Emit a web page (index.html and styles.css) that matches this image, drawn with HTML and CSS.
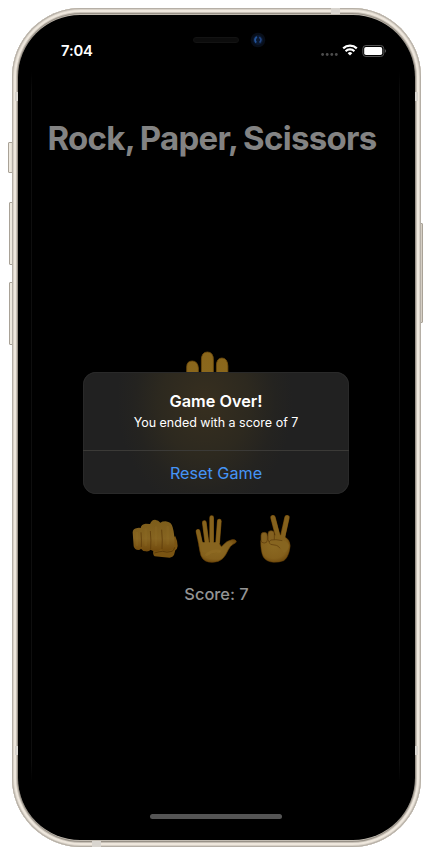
FILE: index.html
```html
<!DOCTYPE html>
<html lang="en">
<head>
<meta charset="utf-8">
<title>Rock, Paper, Scissors</title>
<link rel="stylesheet" href="styles.css">
</head>
<body>
<div class="phone">
  <span class="key mute"></span><span class="key volume-up"></span><span class="key volume-down"></span><span class="key power"></span>
  <div class="frame">
    <div class="screen">
      <span class="edge edge-left"></span><span class="edge edge-right"></span>
      <header class="status">
        <span class="time">7:04</span>
        <span class="indicators">
          <svg width="66" height="14" viewBox="0 0 66 14">
            <g fill="#4d4d4d"><circle cx="2.6" cy="10.5" r="1.4"/><circle cx="7.2" cy="10.5" r="1.4"/><circle cx="11.8" cy="10.5" r="1.4"/><circle cx="16.3" cy="10.5" r="1.4"/></g>
            <g fill="none" stroke="#fff" stroke-width="2.2"><path d="M23.2 4.4a9.8 9.8 0 0 1 13.6 0"/><path d="M25.6 7.2a6.3 6.3 0 0 1 8.8 0"/></g>
            <path d="M27.7 9.2a3.2 3.2 0 0 1 4.6 0L30 11.6z" fill="#fff"/>
            <rect x="42.8" y="1.5" width="21" height="11" rx="3.2" fill="none" stroke="#555" stroke-width="1"/>
            <rect x="44.2" y="2.9" width="18" height="8.2" rx="1.8" fill="#fff"/>
            <path d="M64.8 5.1q2.6 1.8 0 3.8z" fill="#555"/>
          </svg>
        </span>
        <span class="speaker"></span>
        <span class="camera"><svg width="16" height="16" viewBox="0 0 16 16"><circle cx="8" cy="8" r="7.3" fill="#080e19"/><circle cx="8" cy="8" r="5" fill="#0b1930"/><path d="M6.8 4.7Q3.6 7.5 6.2 10.6" fill="none" stroke="#235399" stroke-width="1.8"/><path d="M9.2 5.2q3.4 2.1.4 5.4" fill="none" stroke="#214482" stroke-width="1.6"/></svg></span>
      </header>
      <h1>Rock, Paper, Scissors</h1>
      <div class="choice">
        <svg width="44" height="70" viewBox="0 0 44 70">
          <defs><linearGradient id="finger" x2="0" y2="1"><stop stop-color="#8a661b"/><stop offset="1" stop-color="#8c6c20"/></linearGradient></defs>
          <g fill="url(#finger)" stroke="#6e4b0d" stroke-width=".8"><path d="M1.7 60V16q0-6 5.5-6t6.2 7v43z"/><path d="M16.4 60V9q0-8 6-8t6 8v51z"/><path d="M31.4 60V15q0-8 5.5-8t6 8v45z"/></g>
        </svg>
      </div>
      <div class="hands">
        <svg class="fist" viewBox="36 42 141 120">
          <defs>
            <radialGradient id="skin" cx=".45" cy=".4" r=".65"><stop stop-color="#8b6922"/><stop offset=".7" stop-color="#84601c"/><stop offset="1" stop-color="#6c460a"/></radialGradient>
            <linearGradient id="knuckle" x2="0" y2="1"><stop stop-color="#7c5c1a"/><stop offset=".6" stop-color="#866421"/><stop offset="1" stop-color="#70490c"/></linearGradient>
          </defs>
          <path d="M100 136l60-40 6-2q6 12 7 29-1 9-7 13l-4 14q-3 7-13 8-24-2-45-4-6-3-4-18z" fill="#7a5412"/>
          <path d="M38 82q1-12 14-13 5-1 10 0 2-12 15-13 7 0 13 1 5-13 15-13 11 1 16 9 5-4 16-4 18 2 21 18 7 23 5 56-2 12-18 14-17 2-22-4-7 7-18 6-9-1-13-5-5 6-14 5-10 0-15-8-3 4-8 4-11 0-14-11z" fill="url(#knuckle)"/>
          <g fill="none" stroke="#5d3b0a" stroke-width="2.4"><path d="M63 82q2 25 1 44"/><path d="M91 78q3 28 1 54"/><path d="M125 74q3 32 1 58"/></g>
          <g fill="none" stroke="#94712a" stroke-opacity=".2" stroke-width="8" stroke-linecap="round"><path d="M51 84v35"/><path d="M77 74v46"/><path d="M108 68v52"/><path d="M143 66v50"/></g>
          <path d="M103 144q16-5 25-5 12 5 28 0 7-4 8-12" fill="none" stroke="#573606" stroke-width="2.5"/>
        </svg>
        <svg class="palm" viewBox="45 27 129 150">
          <g fill="none" stroke="#694308" stroke-width="14" stroke-linecap="round"><path d="M54 79l10 48"/><path d="M73 53l8 62"/><path d="M95 38v70"/><path d="M118 48l-5 64"/></g>
          <path d="M57 118h63q1 8 6 6 14-18 30-20 12-1 13 5 0 5-10 9-8 4-14 16-8 17-16 26-12 12-32 12-26 0-34-20-5-15-6-34z" fill="url(#skin)" stroke="#694308" stroke-width="2"/>
          <g fill="none" stroke="#86631d" stroke-width="11" stroke-linecap="round"><path d="M54 79l12 51"/><path d="M73 53l10 75"/><path d="M95 38v85"/><path d="M118 48l-6 80"/></g>
          <path d="M62 112h54l5 24q-24 18-55 4z" fill="#87641f"/>
          <path d="M80 149q18-14 38-10" fill="none" stroke="#9a762b" stroke-opacity=".3" stroke-width="9" stroke-linecap="round"/>
        </svg>
        <svg class="peace" viewBox="237 27 96 150">
          <g fill="none" stroke="#694308" stroke-width="16" stroke-linecap="round"><path d="M279 38l16 62"/><path d="M321 38l-15 65"/></g>
          <path d="M242 107q12-12 28-17h36q14 8 20 16 8 13 2 32-5 21-17 29-12 5-30 5-22-2-31-16-8-16-8-49z" fill="url(#skin)" stroke="#694308" stroke-width="1.5"/>
          <g fill="none" stroke="#84611d" stroke-width="13" stroke-linecap="round"><path d="M279 38l18 66"/><path d="M321 38l-15 71"/></g>
          <g fill="#846120" stroke="#5b390b" stroke-width="2">
            <rect x="243" y="82" width="19" height="32" rx="9"/>
            <rect x="264" y="77" width="19" height="35" rx="9"/>
            <path d="M276 104h28q17 3 23 17-1 17-16 23l-9-13q-12-7-27-10-9-4-8-10 2-6 9-7z" fill="#876520" stroke="none"/>
            <path d="M307 107q-21-5-34-2-10 6-1 13l17 3q7 2 11 9" fill="none"/>
          </g>
        </svg>
      </div>
      <p class="score">Score: 7</p>
      <div class="home"></div>
      <section class="alert">
        <div class="message"><h2>Game Over!</h2><p>You ended with a score of 7</p></div>
        <button>Reset Game</button>
      </section>
    </div>
  </div>
  <span class="band top"></span><span class="band bottom"></span>
  <span class="band left upper"></span><span class="band left lower"></span><span class="band right upper"></span><span class="band right lower"></span>
</div>
</body>
</html>
```

FILE: styles.css
```css
* { box-sizing: border-box; }
body { margin: 0; background: #fff; font-family: Inter, "Liberation Sans", sans-serif; }
.phone { position: relative; width: 409px; height: 839px; margin: 8px 0 0 12px; }
.frame {
  position: relative; height: 100%; padding: 7px 6px; border-radius: 69px;
  background: #c2bcb2;
  box-shadow: inset 0 0 0 1px #b5afa6, inset 0 0 0 2px #d8d1c7, inset 0 0 0 4px #eee7dd, inset 0 0 0 5px #c8c1b7, inset 0 0 0 6px #989187;
}
.screen { position: relative; display: flex; flex-direction: column; height: 825px; border-radius: 62px; background: #000; overflow: hidden; }
.edge { position: absolute; top: 57px; bottom: 58px; width: 1px; background: linear-gradient(transparent, #0e0e0e 3%, #0e0e0e 97%, transparent); }
.edge-left { left: 13px; }
.edge-right { right: 15px; }
.status { display: flex; justify-content: space-between; align-items: center; height: 70px; padding: 0 29px 0 43px; flex: none; }
.time { margin-top: 2px; color: #fff; font-size: 14.8px; font-weight: 600; letter-spacing: -.15px; }
.indicators { display: flex; margin-top: 1px; }
.speaker { position: absolute; left: 175px; top: 22px; width: 46px; height: 6px; border-radius: 3px; background: #0c0c0c; border: 1px solid #131313; }
.camera { position: absolute; left: 232px; top: 17px; width: 16px; height: 16px; }
.camera svg { display: block; }
h1 { margin: 33px 0 0 -9px; height: 40px; line-height: 40px; text-align: center; white-space: nowrap; color: #838383; font-size: 33px; font-weight: 650; letter-spacing: -.7px; word-spacing: -1.5px; flex: none; }
.choice { margin: 193px 0 0 167px; height: 70px; }
.choice svg, .hands svg { display: block; }
.hands { display: flex; align-items: center; height: 50px; margin: 93px 0 0 114px; }
.fist { width: 47px; height: 40px; }
.palm { width: 43px; height: 50px; margin-left: 16px; }
.peace { width: 32px; height: 50px; margin-left: 21px; }
.score { margin: 20px 0 0; height: 20px; line-height: 20px; text-align: center; color: #949494; font-size: 16.4px; font-weight: 500; }
.home { width: 132px; height: 5px; margin: auto auto 21px 132px; border-radius: 3px; background: #555; }
.alert { position: absolute; left: 65px; top: 357px; width: 266px; height: 122px; border-radius: 13px; overflow: hidden; background: radial-gradient(ellipse 88px 110px at 122px 30px, #372f1f, #2d291f 50%, #242320 80%, #212121 100%); box-shadow: inset 0 0 0 1px #292929; }
.message { height: 79px; padding-top: 19px; text-align: center; border-bottom: 1px solid #3b3a37; }
h2 { margin: 0; color: #fff; font-size: 16.3px; line-height: 21px; font-weight: 600; }
.message p { margin: 2px 0 0; color: #fff; font-size: 12.5px; line-height: 17px; }
button { display: block; width: 100%; height: 43px; padding: 0; border: 0; background: transparent; color: #4594f7; font: 16.2px Inter, sans-serif; }
.key { position: absolute; z-index: -1; border: 1px solid #a9a297; border-radius: 1px; background: linear-gradient(90deg, #eee9df 50%, #c9c2b7); }
.mute { left: -4px; top: 134px; width: 6px; height: 31px; }
.volume-up { left: -3px; top: 194px; width: 6px; height: 63px; }
.volume-down { left: -3px; top: 274px; width: 6px; height: 63px; }
.power { right: -2px; top: 215px; width: 5px; height: 100px; }
.band { position: absolute; background: #d9d5cf; }
.top { left: 319px; top: 0; width: 9px; height: 6px; }
.bottom { left: 80px; bottom: 0; width: 9px; height: 6px; }
.left, .right { width: 3px; height: 9px; }
.left { left: 3px; }
.right { right: 3px; }
.upper { top: 84px; }
.lower { bottom: 92px; }
```
